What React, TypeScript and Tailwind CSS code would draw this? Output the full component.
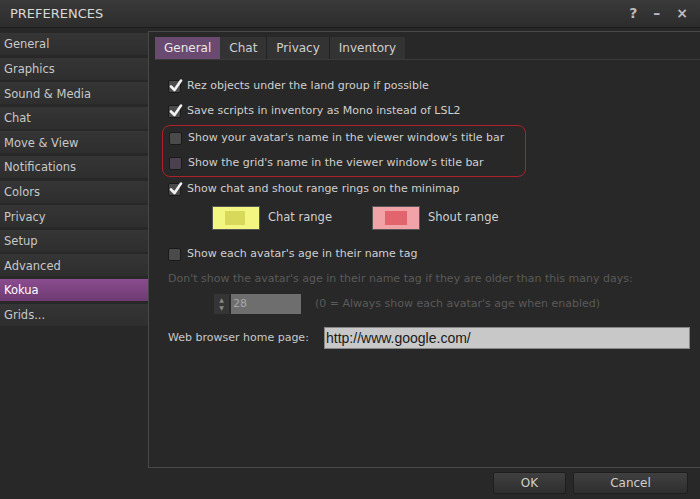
import React from "react";

const items = ["General","Graphics","Sound & Media","Chat","Move & View","Notifications","Colors","Privacy","Setup","Advanced","Kokua","Grids..."];

function Check({ checked, purple }: { checked?: boolean; purple?: boolean }) {
  return (
    <div className={`relative w-[13px] h-[13px] shrink-0 rounded-[2px] border border-[#1a1a1a] ${purple ? "bg-[#4a4050]" : "bg-[#4a4a4a]"}`}>
      {checked && (
        <svg viewBox="0 0 14 14" className="absolute left-[0px] top-[-2px] w-[14px] h-[14px]">
          <path d="M2 7.5 L5.5 11 L12 1.5" fill="none" stroke="#f2f2f2" strokeWidth="2.6" strokeLinecap="round" strokeLinejoin="round" />
        </svg>
      )}
    </div>
  );
}

function Row({ text, checked, purple }: { text: string; checked?: boolean; purple?: boolean }) {
  return (
    <div className="flex items-center gap-[6px] h-[25px] whitespace-nowrap">
      <Check checked={checked} purple={purple} />
      <span>{text}</span>
    </div>
  );
}

export default function App() {
  return (
    <div className="w-[700px] h-[499px] bg-[#282828] text-[#cfcfcf] flex flex-col overflow-hidden text-[11px]" style={{ fontFamily: '"DejaVu Sans", sans-serif' }}>
      <div className="h-[28px] shrink-0 flex items-center justify-between px-[10px] bg-gradient-to-b from-[#3a3a3a] to-[#2c2c2c] border-b border-[#1c1c1c]">
        <span className="text-[13px] text-[#d8d8d8]">PREFERENCES</span>
        <div className="flex items-center gap-[16px] text-[#bcbcbc] text-[14px] font-bold pr-[2px]">
          <span>?</span><span>–</span><span>×</span>
        </div>
      </div>
      <div className="flex flex-1 pt-[3px]">
        <div className="w-[148px] shrink-0 flex flex-col gap-[2.6px] pt-[2px] text-[11.5px]">
          {items.map((it) => (
            <div key={it} className={`h-[22px] flex items-center px-[4px] pt-[2px] ${it === "Kokua" ? "bg-gradient-to-b from-[#8a4d8e] to-[#6e3a72] text-white" : "bg-gradient-to-b from-[#353535] to-[#2e2e2e] text-[#c8c8c8]"}`}>{it}</div>
          ))}
        </div>
        <div className="flex-1 flex flex-col">
          <div className="h-[437px] border-l border-t border-b border-[#484848] bg-[#282828] flex flex-col">
            <div className="flex mt-[5px] ml-[6px] h-[23px] border-b border-[#3a3a3a] text-[12px]">
              <div className="px-[9px] flex items-center bg-[#6a4a70] text-[#e8e8e8]">General</div>
              <div className="px-[9px] flex items-center bg-[#333333] border-r border-[#222]">Chat</div>
              <div className="px-[9px] flex items-center bg-[#333333] border-r border-[#222]">Privacy</div>
              <div className="px-[9px] flex items-center bg-[#333333]">Inventory</div>
            </div>
            <div className="pl-[19px] pt-[14px] flex flex-col">
              <Row text="Rez objects under the land group if possible" checked />
              <Row text="Save scripts in inventory as Mono instead of LSL2" checked />
              <div className="mt-[1px] -ml-[6px] w-[364px] h-[52px] border border-[#b0202a] rounded-[8px] pl-[6px] flex flex-col justify-center">
                <Row text="Show your avatar's name in the viewer window's title bar" />
                <Row text="Show the grid's name in the viewer window's title bar" purple />
              </div>
              <Row text="Show chat and shout range rings on the minimap" checked />
              <div className="flex items-center h-[28px] mt-[2px] ml-[44px] text-[11.5px]">
                <div className="w-[48px] h-[24px] bg-[#f4f682] border border-[#555] relative"><div className="absolute left-[12px] top-[4px] w-[20px] h-[14px] bg-[#d8d85a]" /></div>
                <span className="ml-[8px] w-[104px]">Chat range</span>
                <div className="w-[48px] h-[24px] bg-[#f2a3a8] border border-[#555] relative"><div className="absolute left-[12px] top-[4px] w-[22px] h-[14px] bg-[#e2646c]" /></div>
                <span className="ml-[8px]">Shout range</span>
              </div>
              <div className="mt-[10px]"><Row text="Show each avatar's age in their name tag" /></div>
              <div className="h-[24px] flex items-center text-[#5a5a5a] whitespace-nowrap">Don't show the avatar's age in their name tag if they are older than this many days:</div>
              <div className="flex items-center h-[26px] ml-[46px]">
                <div className="w-[15px] h-[20px] bg-[#353535] flex flex-col items-center justify-center text-[6px] text-[#888] leading-[8px]"><span>▲</span><span>▼</span></div>
                <div className="ml-[2px] w-[70px] h-[20px] bg-[#6e6e6e] text-[#a8a8a8] flex items-center px-[2px]">28</div>
                <span className="ml-[14px] text-[#5a5a5a]">(0 = Always show each avatar's age when enabled)</span>
              </div>
              <div className="flex items-center h-[24px] mt-[9px]">
                <span className="text-[#c8c8c8] w-[156px]">Web browser home page:</span>
                <div className="w-[366px] h-[22px] bg-[#c8c8c8] border border-[#888] text-[#1a1a1a] flex items-center px-[1px] text-[14px]" style={{ fontFamily: '"Liberation Sans", sans-serif' }}>http://www.google.com/</div>
              </div>
            </div>
          </div>
          <div className="flex justify-end gap-[7px] pr-[12px] pt-[4px] text-[12px]">
            <div className="w-[73px] h-[22px] bg-gradient-to-b from-[#404040] to-[#2e2e2e] border border-[#1e1e1e] rounded-[2px] flex items-center justify-center">OK</div>
            <div className="w-[115px] h-[22px] bg-gradient-to-b from-[#404040] to-[#2e2e2e] border border-[#1e1e1e] rounded-[2px] flex items-center justify-center">Cancel</div>
          </div>
        </div>
      </div>
    </div>
  );
}
